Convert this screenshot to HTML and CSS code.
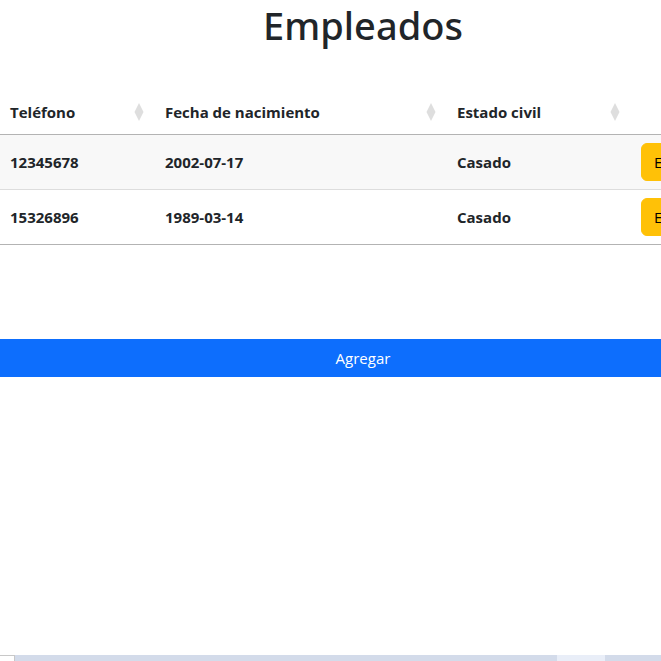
FILE: index.html
```html
<!DOCTYPE html>
<html lang="es">
<head>
<meta charset="utf-8">
<title>Empleados</title>
<link rel="stylesheet" href="styles.css">
</head>
<body>
<div class="page">
  <h1 class="title">Empleados</h1>
  <table class="grid">
    <colgroup>
      <col class="c1"><col class="c2"><col class="c3"><col class="c4">
    </colgroup>
    <thead>
      <tr>
        <th><div class="th-in"><span>Teléfono</span><svg class="sort" viewBox="0 0 10 18"><path d="M5 0 L9.5 9 L5 18 L0.5 9 Z"/></svg></div></th>
        <th><div class="th-in"><span>Fecha de nacimiento</span><svg class="sort" viewBox="0 0 10 18"><path d="M5 0 L9.5 9 L5 18 L0.5 9 Z"/></svg></div></th>
        <th><div class="th-in"><span>Estado civil</span><svg class="sort" viewBox="0 0 10 18"><path d="M5 0 L9.5 9 L5 18 L0.5 9 Z"/></svg></div></th>
        <th></th>
      </tr>
    </thead>
    <tbody>
      <tr class="odd">
        <td>12345678</td>
        <td>2002-07-17</td>
        <td>Casado</td>
        <td><div class="actions"><button class="btn btn-edit">Editar</button><button class="btn btn-del">Eliminar</button></div></td>
      </tr>
      <tr>
        <td>15326896</td>
        <td>1989-03-14</td>
        <td>Casado</td>
        <td><div class="actions"><button class="btn btn-edit">Editar</button><button class="btn btn-del">Eliminar</button></div></td>
      </tr>
    </tbody>
  </table>
  <button class="add">Agregar</button>
</div>
<div class="hscroll">
  <div class="hs-btn"></div>
  <div class="hs-track"><div class="hs-a"></div><div class="hs-b"></div><div class="hs-c"></div></div>
</div>
</body>
</html>
```

FILE: styles.css
```css
html, body {
  margin: 0;
  padding: 0;
  overflow: hidden;
  height: 661px;
}
body {
  font-family: "Open Sans", "Noto Sans", sans-serif;
  color: #212529;
  background: #fff;
  display: flex;
  flex-direction: column;
}
.page {
  width: 726px;
  flex: 1;
  display: flex;
  flex-direction: column;
}
.title {
  margin: 0;
  padding-top: 1px;
  font-family: "Noto Sans", "Open Sans", sans-serif;
  font-size: 38px;
  font-weight: 500;
  line-height: 48px;
  text-align: center;
}
.grid {
  margin-top: 41px;
  width: 726px;
  border-collapse: collapse;
  table-layout: fixed;
  font-size: 15px;
  font-weight: 700;
}
.c1 { width: 155px; }
.c2 { width: 292px; }
.c3 { width: 184px; }
.c4 { width: 95px; }
.grid th {
  box-sizing: border-box;
  text-align: left;
  padding: 10px 11px 10px 10px;
  line-height: 24px;
  border-bottom: 1px solid #b3b3b3;
}
.th-in {
  display: flex;
  align-items: center;
  justify-content: space-between;
}
.sort {
  width: 10px;
  height: 18px;
  fill: #dedede;
  flex-shrink: 0;
}
.grid td {
  box-sizing: border-box;
  padding: 8px 10px;
  line-height: 24px;
  border-bottom: 1px solid #dddddd;
  white-space: nowrap;
  overflow: hidden;
}
.grid tbody tr:last-child td {
  border-bottom-color: #b3b3b3;
}
.grid tr.odd td {
  background: #f8f8f8;
}
.actions {
  display: flex;
  gap: 6px;
}
.btn {
  font-family: inherit;
  font-size: 15px;
  font-weight: 400;
  line-height: 24px;
  padding: 6px 12px;
  border: 1px solid transparent;
  border-radius: 6px;
  height: 38px;
  flex-shrink: 0;
}
.btn-edit {
  background: #ffc107;
  border-color: #ffc107;
  color: #000;
}
.btn-del {
  background: #dc3545;
  color: #fff;
}
.add {
  margin-top: 94px;
  width: 726px;
  height: 38px;
  border: 0;
  background: #0d6efd;
  color: #fff;
  font-family: inherit;
  font-size: 15px;
  line-height: 24px;
  padding: 6px 12px;
}
.hscroll {
  height: 6px;
  display: flex;
  flex-shrink: 0;
}
.hs-btn {
  width: 15px;
  border-top: 1px solid #c8c8c8;
  border-right: 1px solid #c8c8c8;
  box-sizing: border-box;
  background: #fff;
}
.hs-track {
  flex: 1;
  display: flex;
}
.hs-a { width: 542px; background: #d3dbea; }
.hs-b { width: 48px; background: #e9eef8; }
.hs-c { flex: 1; background: #d3dbea; }
```
